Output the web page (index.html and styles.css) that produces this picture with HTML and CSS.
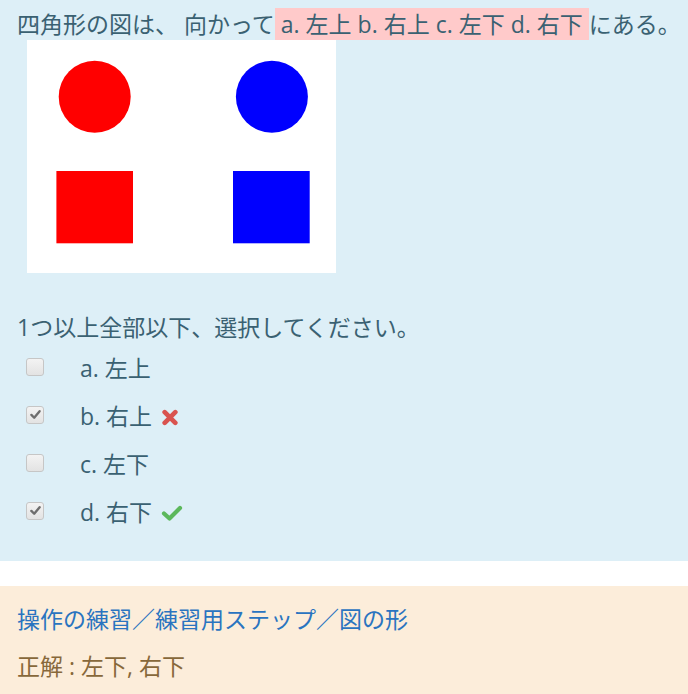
FILE: index.html
```html
<!DOCTYPE html>
<html lang="ja">
<head>
<meta charset="utf-8">
<title>四角形の図</title>
<link rel="stylesheet" href="styles.css">
</head>
<body>
<div class="que">
  <div class="formulation">
    <div class="qtext">
      <p class="qline">四角形の図は、 向かって<span class="hl"> a. 左上 b. 右上 c. 左下 d. 右下 </span>にある。</p>
      <svg class="figure" width="309" height="233" viewBox="0 0 309 233">
        <rect x="0" y="0" width="309" height="233" fill="#ffffff"/>
        <circle cx="67.7" cy="56.7" r="36" fill="#ff0000"/>
        <circle cx="244.9" cy="56.7" r="36" fill="#0000ff"/>
        <rect x="29.4" y="131" width="76.6" height="72.3" fill="#ff0000"/>
        <rect x="206" y="131" width="76.7" height="72.3" fill="#0000ff"/>
      </svg>
    </div>
    <div class="prompt">1つ以上全部以下、選択してください。</div>
    <div class="answer">
      <div class="opt">
        <span class="cb"></span>
        <span class="lbl">a. 左上</span>
      </div>
      <div class="opt">
        <span class="cb checked"><svg viewBox="0 0 12 12" width="13" height="13"><polyline points="2.2,6.4 4.8,9 9.8,3" fill="none" stroke="#6e6e6e" stroke-width="2.2" stroke-linecap="round" stroke-linejoin="round"/></svg></span>
        <span class="lbl">b. 右上 <svg class="icon" viewBox="0 0 16 16" width="18" height="17"><path d="M3 3 L13 13 M13 3 L3 13" stroke="#d9534f" stroke-width="4.4" stroke-linecap="round" fill="none"/></svg></span>
      </div>
      <div class="opt">
        <span class="cb"></span>
        <span class="lbl">c. 左下</span>
      </div>
      <div class="opt">
        <span class="cb checked"><svg viewBox="0 0 12 12" width="13" height="13"><polyline points="2.2,6.4 4.8,9 9.8,3" fill="none" stroke="#6e6e6e" stroke-width="2.2" stroke-linecap="round" stroke-linejoin="round"/></svg></span>
        <span class="lbl">d. 右下 <svg class="icon" viewBox="0 0 22 16" width="22" height="16"><polyline points="3,8.5 8.5,13.5 19,3" fill="none" stroke="#5cb85c" stroke-width="4.2" stroke-linecap="round" stroke-linejoin="round"/></svg></span>
      </div>
    </div>
  </div>
  <div class="outcome">
    <a class="crumb" href="#">操作の練習／練習用ステップ／図の形</a>
    <div class="rightanswer">正解 : 左下, 右下</div>
  </div>
</div>
</body>
</html>
```
FILE: styles.css
```css
html, body {
  margin: 0;
  padding: 0;
  background: #ffffff;
}
body {
  font-family: "Open Sans", "Noto Sans CJK JP", sans-serif;
  font-size: 23px;
  line-height: 31px;
  width: 688px;
  height: 694px;
  overflow: hidden;
}
.formulation {
  background: #ddeff7;
  color: #3a6172;
  padding: 9px 17px 24.5px 17px;
}
.qline {
  margin: 0;
  white-space: nowrap;
}
.hl {
  background: #ffcaca;
}
.figure {
  display: block;
  margin: 0 0 0 10px;
}
.prompt {
  margin-top: 39px;
}
.answer {
  display: flex;
  flex-direction: column;
  margin-top: 1.5px;
}
.opt {
  height: 48px;
  display: flex;
  align-items: center;
  padding-left: 9px;
}
.cb {
  width: 16px;
  height: 16px;
  border: 1px solid #c6c6c6;
  border-radius: 3px;
  background: linear-gradient(#f3f3f3, #e3e3e3);
  display: flex;
  align-items: center;
  justify-content: center;
  margin-top: -4px;
  flex: none;
}
.lbl {
  margin-left: 36px;
  display: flex;
  align-items: center;
  white-space: pre;
}
.icon {
  margin-left: 3px;
  margin-top: 1px;
}
.outcome {
  margin-top: 25px;
  background: #fcedda;
  color: #87683a;
  padding: 18px 17px 20px 17px;
}
.crumb {
  display: block;
  color: #2a74c0;
  text-decoration: none;
}
.rightanswer {
  margin-top: 16px;
}
```
